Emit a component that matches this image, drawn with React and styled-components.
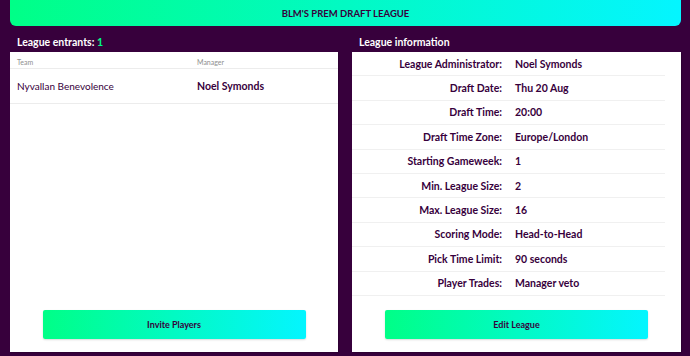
import styled, { createGlobalStyle } from "styled-components";

const GlobalStyle = createGlobalStyle`
  html, body {
    margin: 0;
    padding: 0;
    background: #37003c;
  }
  body {
    font-family: Lato, "Noto Sans", sans-serif;
    color: #37003c;
  }
`;

const Page = styled.div`
  width: 690px;
  height: 356px;
  padding: 0 9px 0 10px;
  box-sizing: border-box;
  display: flex;
  flex-direction: column;
`;

const Banner = styled.div`
  height: 26px;
  border-radius: 0 0 6px 6px;
  background: linear-gradient(to right, #00ff87, #04f5ff);
  display: flex;
  align-items: center;
  justify-content: center;
  font-size: 9.5px;
  font-weight: 700;
  color: #37003c;
`;

const Columns = styled.div`
  display: grid;
  grid-template-columns: 328px 329px;
  column-gap: 14px;
`;

const Column = styled.div`
  display: flex;
  flex-direction: column;
`;

const Heading = styled.h2`
  margin: 0;
  height: 26px;
  padding: 9px 0 0 7px;
  box-sizing: border-box;
  font-size: 10.5px;
  line-height: 14px;
  font-weight: 700;
  color: #fff;
`;

const Count = styled.span`
  color: #00ff87;
`;

const Panel = styled.div`
  background: #fff;
  height: 300px;
  display: flex;
  flex-direction: column;
  box-shadow: 1px 1px 1px rgba(0, 0, 0, 0.15);
`;

const EntrantRow = styled.div`
  display: grid;
  grid-template-columns: 180px 1fr;
  align-items: center;
  height: ${(p) => (p.$head ? "16px" : "34px")};
  padding: 0 6px 0 7px;
  border-bottom: 1px solid #ececec;
  font-size: ${(p) => (p.$head ? "7px" : "10px")};
  color: ${(p) => (p.$head ? "#8f8f8f" : "#37003c")};
`;

const Cell = styled.span`
  font-weight: ${(p) => (p.$bold ? 700 : 400)};
  font-size: ${(p) => (p.$bold ? "10.5px" : "inherit")};
  padding-top: ${(p) => (p.$head ? "4px" : "0")};
`;

const InfoTable = styled.div`
  width: 313px;
`;

const InfoRow = styled.div`
  display: grid;
  grid-template-columns: 150px 1fr;
  column-gap: 13px;
  align-items: center;
  height: 24.4px;
  border-bottom: 1px solid #f0f0f0;
  box-sizing: border-box;
  font-size: 10.5px;
  font-weight: 700;
`;

const Label = styled.span`
  text-align: right;
`;

const Button = styled.button`
  margin: auto auto 13px;
  width: 263px;
  height: 29px;
  border: 0;
  border-radius: 2px;
  background: linear-gradient(to right, #00ff87, #04f5ff);
  box-shadow: 0 1px 2px rgba(0, 0, 0, 0.15);
  font-family: inherit;
  font-size: 9px;
  font-weight: 700;
  color: #37003c;
  cursor: pointer;
`;

const info = [
  ["League Administrator:", "Noel Symonds"],
  ["Draft Date:", "Thu 20 Aug"],
  ["Draft Time:", "20:00"],
  ["Draft Time Zone:", "Europe/London"],
  ["Starting Gameweek:", "1"],
  ["Min. League Size:", "2"],
  ["Max. League Size:", "16"],
  ["Scoring Mode:", "Head-to-Head"],
  ["Pick Time Limit:", "90 seconds"],
  ["Player Trades:", "Manager veto"],
];

export default function App() {
  return (
    <>
      <GlobalStyle />
      <Page>
        <Banner>BLM'S PREM DRAFT LEAGUE</Banner>
        <Columns>
          <Column>
            <Heading>
              League entrants: <Count>1</Count>
            </Heading>
            <Panel>
              <EntrantRow $head>
                <Cell $head>Team</Cell>
                <Cell $head>Manager</Cell>
              </EntrantRow>
              <EntrantRow>
                <Cell>Nyvallan Benevolence</Cell>
                <Cell $bold>Noel Symonds</Cell>
              </EntrantRow>
              <Button>Invite Players</Button>
            </Panel>
          </Column>
          <Column>
            <Heading>League information</Heading>
            <Panel>
              <InfoTable>
                {info.map(([label, value]) => (
                  <InfoRow key={label}>
                    <Label>{label}</Label>
                    <span>{value}</span>
                  </InfoRow>
                ))}
              </InfoTable>
              <Button>Edit League</Button>
            </Panel>
          </Column>
        </Columns>
      </Page>
    </>
  );
}
